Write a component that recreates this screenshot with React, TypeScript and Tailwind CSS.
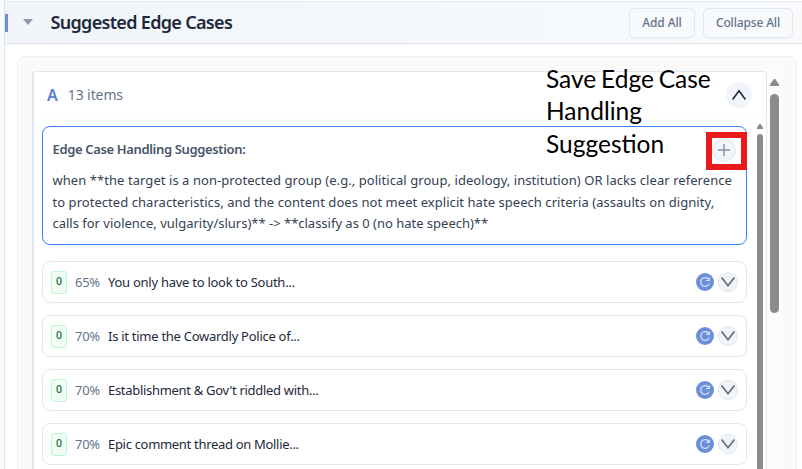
const rows = [
  { pct: '65%', title: 'You only have to look to South...', track: 'tracking-[-0.26px]' },
  { pct: '70%', title: 'Is it time the Cowardly Police of...', track: 'tracking-[-0.27px]' },
  { pct: '70%', title: "Establishment & Gov't riddled with...", track: 'tracking-[-0.3px]' },
  { pct: '70%', title: 'Epic comment thread on Mollie...', track: 'tracking-[-0.31px]' },
];

function Row({ pct, title, track }: { pct: string; title: string; track: string }) {
  return (
    <div className="flex h-[42px] shrink-0 items-center rounded-lg border border-[#e2e8f0] bg-white pr-2 pl-2">
      <span className="flex h-[23px] w-4 items-center justify-center rounded-[3px] border border-[#bbf7d0] bg-[#f0fdf4] pb-px text-[10.5px] font-medium text-[#166534]">0</span>
      <span className="ml-2 w-[33px] pt-px text-[13px] tracking-[-0.3px] text-[#64748b]">{pct}</span>
      <span className={`pt-px text-[13px] whitespace-nowrap text-[#1e293b] ${track}`}>{title}</span>
      <span className="ml-auto flex size-[18px] items-center justify-center rounded-full bg-[#6b8fd9]">
        <svg width="12" height="12" viewBox="0 0 12 12" fill="none" stroke="#dbe5fa" strokeWidth="1.2">
          <path d="M10.2 7.6A4.4 4.4 0 1 1 9.7 3.4M10.3 1.6v2.9H7" />
        </svg>
      </span>
      <span className="ml-1 flex size-5 items-center justify-center rounded-full border border-[#e2e8f0] bg-[#f1f5f9]">
        <svg width="16" height="12" viewBox="0 0 16 12" className="mb-px shrink-0" fill="none" stroke="#5d6b80" strokeWidth="1.7">
          <path d="M1.6 1.4L8 9.7L14.4 1.4" />
        </svg>
      </span>
    </div>
  );
}

export default function App() {
  return (
    <div className="relative flex h-[469px] w-[802px] overflow-hidden bg-white font-['Noto_Sans','Open_Sans',sans-serif]">
      <div className="w-[5px] shrink-0 border-r border-[#dfe7f0] bg-[#f8fafc]" />
      <div className="flex min-w-0 flex-1 flex-col">
        <header className="mt-px flex h-[43px] shrink-0 items-center border-y border-[#e2e8f0] bg-gradient-to-r from-[#f1f5f9] to-[#f8fafc] pr-[9px] shadow-[0_1px_2px_rgba(15,23,42,0.04)]">
          <div className="h-[18px] w-[3px] bg-[#6b8fd9]" />
          <svg width="10" height="6" viewBox="0 0 10 6" className="mb-px ml-[15px]"><path d="M0 0h10L5 6z" fill="#8b98aa" /></svg>
          <h1 className="mb-px ml-[17.5px] text-[18px] leading-6 font-semibold tracking-[-0.68px] text-[#1e293b]">Suggested Edge Cases</h1>
          <button className="ml-auto flex h-[30px] w-[66px] items-center justify-center rounded-md border border-[#e2e8f0] bg-[#f8fafc] text-[12px] font-medium tracking-[-0.1px] whitespace-nowrap text-[#64748b] shadow-[0_1px_2px_rgba(15,23,42,0.04)]">Add All</button>
          <button className="ml-2 flex h-[30px] w-[90px] items-center justify-center rounded-md border border-[#e2e8f0] bg-[#f8fafc] text-[12px] font-medium tracking-[-0.15px] whitespace-nowrap text-[#64748b] shadow-[0_1px_2px_rgba(15,23,42,0.04)]">Collapse All</button>
        </header>
        <div className="mt-3 mr-[5px] ml-3 flex h-[440px] shrink-0 rounded-t-lg border border-[#edf1f5] bg-[#fafafa] pt-[14px] pl-[14px]">
          <div className="flex w-[735px] shrink-0 flex-col overflow-hidden rounded-t-[4px] border-t border-r border-l-2 border-[#dfe7f0] bg-white">
            <div className="flex h-[46px] shrink-0 items-center pr-[14px] pl-[13px]">
              <span className="mb-px text-[16px] font-semibold text-[#5b7fd6]">A</span>
              <span className="mb-px ml-[10px] text-[14px] tracking-[-0.1px] text-[#64748b]">13 items</span>
              <span className="ml-auto flex size-[26px] items-center justify-center rounded-full bg-[#f1f5f9]">
                <svg width="16" height="12" viewBox="0 0 16 12" fill="none" stroke="#1e293b" strokeWidth="1.6"><path d="M1.6 10.4L8 1.8l6.4 8.6" /></svg>
              </span>
            </div>
            <div className="flex flex-1 border-t border-[#f8fafc]">
              <div className="ml-2 flex w-[705px] shrink-0 flex-col gap-3 pt-[7px]">
                <section className="mb-1 flex h-[119px] shrink-0 flex-col rounded-lg border border-[#3b82f6] bg-white pl-[9.5px] shadow-[0_1px_3px_rgba(59,130,246,0.08)]">
                  <div className="flex h-[43px] items-center justify-between pr-[10px] pt-[3px]">
                    <h2 className="text-[13px] font-semibold tracking-[-0.35px] text-[#475569]">Edge Case Handling Suggestion:</h2>
                    <span className="flex size-6 items-center justify-center rounded-full border border-[#e2e8f0] bg-[#f1f5f9]">
                      <svg width="12" height="12" viewBox="0 0 12 12" stroke="#8492a6" strokeWidth="1.5"><path d="M6 0v12M0 6h12" /></svg>
                    </span>
                  </div>
                  <div className="text-[13px] leading-[21.5px] whitespace-nowrap text-[#334155]">
                    <p className="tracking-[0.06px]">when **the target is a non-protected group (e.g., political group, ideology, institution) OR lacks clear reference</p>
                    <p className="tracking-[0.05px]">to protected characteristics, and the content does not meet explicit hate speech criteria (assaults on dignity,</p>
                    <p className="tracking-[-0.01px]">{'calls for violence, vulgarity/slurs)** -> **classify as 0 (no hate speech)**'}</p>
                  </div>
                </section>
                {rows.map((r) => <Row key={r.title} {...r} />)}
              </div>
              <div className="ml-[10px] w-[6px] shrink-0 pt-[5px]">
                <svg width="6" height="5" viewBox="0 0 6 5" className="block"><path d="M2.4 0h1.2L6 3.6V5H0V3.6z" fill="#8b8b8b" /></svg>
                <div className="mt-[5px] h-[350px] rounded-t-full bg-[#8b8b8b]" />
              </div>
            </div>
          </div>
          <div className="w-[15px] shrink-0 bg-[#fcfcfc] pt-2 pl-[3px]">
            <svg width="9" height="7" viewBox="0 0 9 7" className="block"><path d="M3.8 0h1.4L9 5.5V7H0V5.5z" fill="#8b8b8b" /></svg>
            <div className="mt-2 h-[219px] w-[9px] rounded-full bg-[#8b8b8b]" />
          </div>
        </div>
      </div>
      <p className="absolute top-[62.5px] left-[546px] font-['Lato',sans-serif] text-[24.5px] leading-[32.5px] [word-spacing:-1.5px] whitespace-nowrap text-black">Save Edge Case<br />Handling<br />Suggestion</p>
      <div className="absolute top-[132px] left-[706px] h-[38px] w-[41px] border-[6px] border-[#e81a1c]" />
    </div>
  );
}
